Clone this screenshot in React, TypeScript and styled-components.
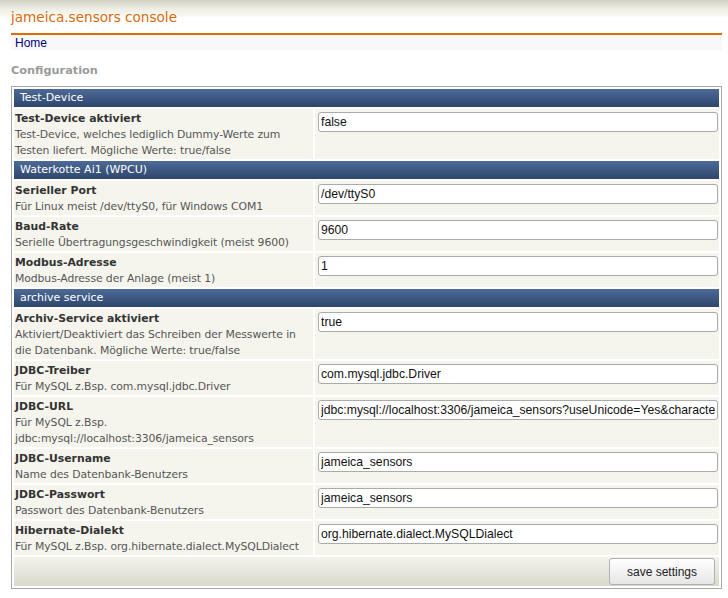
import styled, { createGlobalStyle } from "styled-components";

type Field = {
    label: string;
    desc: string;
    value: string;
};

type Section = {
    title: string;
    fields: Field[];
};

const sections: Section[] = [
    {
        title: "Test-Device",
        fields: [
            {
                label: "Test-Device aktiviert",
                desc: "Test-Device, welches lediglich Dummy-Werte zum Testen liefert. Mögliche Werte: true/false",
                value: "false",
            },
        ],
    },
    {
        title: "Waterkotte Ai1 (WPCU)",
        fields: [
            {
                label: "Serieller Port",
                desc: "Für Linux meist /dev/ttyS0, für Windows COM1",
                value: "/dev/ttyS0",
            },
            {
                label: "Baud-Rate",
                desc: "Serielle Übertragungsgeschwindigkeit (meist 9600)",
                value: "9600",
            },
            {
                label: "Modbus-Adresse",
                desc: "Modbus-Adresse der Anlage (meist 1)",
                value: "1",
            },
        ],
    },
    {
        title: "archive service",
        fields: [
            {
                label: "Archiv-Service aktiviert",
                desc: "Aktiviert/Deaktiviert das Schreiben der Messwerte in die Datenbank. Mögliche Werte: true/false",
                value: "true",
            },
            {
                label: "JDBC-Treiber",
                desc: "Für MySQL z.Bsp. com.mysql.jdbc.Driver",
                value: "com.mysql.jdbc.Driver",
            },
            {
                label: "JDBC-URL",
                desc: "Für MySQL z.Bsp. jdbc:mysql://localhost:3306/jameica_sensors",
                value: "jdbc:mysql://localhost:3306/jameica_sensors?useUnicode=Yes&characterEncoding=ISO8859_1",
            },
            {
                label: "JDBC-Username",
                desc: "Name des Datenbank-Benutzers",
                value: "jameica_sensors",
            },
            {
                label: "JDBC-Passwort",
                desc: "Passwort des Datenbank-Benutzers",
                value: "jameica_sensors",
            },
            {
                label: "Hibernate-Dialekt",
                desc: "Für MySQL z.Bsp. org.hibernate.dialect.MySQLDialect",
                value: "org.hibernate.dialect.MySQLDialect",
            },
        ],
    },
];

const App = () => {
    return (
        <>
            <GlobalStyle />
            <Page>
                <Header>
                    <Title>jameica.sensors console</Title>
                </Header>
                <Nav>
                    <NavLink href="#">Home</NavLink>
                </Nav>
                <Heading>Configuration</Heading>
                <Box>
                    <Grid>
                        {sections.map((section) => (
                            <SectionBlock key={section.title}>
                                <SectionHead>{section.title}</SectionHead>
                                {section.fields.map((field) => (
                                    <FieldRow key={field.label}>
                                        <LabelCell>
                                            <Label>{field.label}</Label>
                                            <Desc>{field.desc}</Desc>
                                        </LabelCell>
                                        <ValueCell>
                                            <Input defaultValue={field.value} />
                                        </ValueCell>
                                    </FieldRow>
                                ))}
                            </SectionBlock>
                        ))}
                        <Footer>
                            <SaveButton>save settings</SaveButton>
                        </Footer>
                    </Grid>
                </Box>
            </Page>
        </>
    );
};

const GlobalStyle = createGlobalStyle`
    body {
        margin: 0;
        background: #ffffff;
        font-family: "DejaVu Sans", Verdana, sans-serif;
    }
`;

const Page = styled.div`
    background: linear-gradient(#d2d1c3 0, #eeeee5 9px, #f9f9f3 16px, #ffffff 17px) no-repeat;
    background-size: 100% 17px;
    padding: 0 6px 0 11px;
`;

const Header = styled.div`
    height: 33px;
    display: flex;
    align-items: center;
    border-bottom: 2px solid #dc6d05;
`;

const Title = styled.h1`
    margin: 1px 0 0;
    font-size: 13.6px;
    font-weight: normal;
    color: #d9690a;
`;

const Nav = styled.div`
    height: 15px;
    display: flex;
    align-items: center;
    padding-left: 4px;
    background: #f8f8f8;
`;

const NavLink = styled.a`
    font-family: "Liberation Sans", Arial, sans-serif;
    font-size: 12px;
    color: #000080;
    text-decoration: none;
`;

const Heading = styled.h2`
    margin: 0;
    padding: 13px 0 8px;
    font-size: 11.3px;
    line-height: 15px;
    font-weight: bold;
    color: #9a9a9a;
`;

const Box = styled.div`
    border: 1px solid #a8a8a8;
    padding: 1px 2px 2px;
`;

const Grid = styled.div`
    display: grid;
    grid-template-columns: 299px 1fr;
    row-gap: 2px;
    column-gap: 2px;
    padding-top: 1px;
`;

const SectionBlock = styled.div`
    display: contents;
`;

const SectionHead = styled.div`
    grid-column: 1 / -1;
    height: 18px;
    line-height: 18px;
    padding-left: 6px;
    font-size: 11px;
    color: #ffffff;
    background: linear-gradient(#4d6a97, #2e466c);
`;

const FieldRow = styled.div`
    display: contents;
`;

const LabelCell = styled.div`
    background: #f5f5ee;
    padding: 2px 0 0 1px;
    line-height: 16px;
    font-size: 10.85px;
`;

const Label = styled.div`
    font-weight: bold;
    color: #333333;
`;

const Desc = styled.div`
    color: #555555;
    letter-spacing: -0.1px;
`;

const ValueCell = styled.div`
    background: #f5f5ee;
    padding: 3px 1px 0 3px;
`;

const Input = styled.input`
    box-sizing: border-box;
    display: block;
    width: 100%;
    height: 20px;
    padding: 0 2px;
    border: 1px solid #ababab;
    border-radius: 3px;
    background: #ffffff;
    font-family: "Liberation Sans", Arial, sans-serif;
    font-size: 12.2px;
    color: #111111;
    outline: none;
`;

const Footer = styled.div`
    grid-column: 1 / -1;
    height: 29px;
    display: flex;
    justify-content: flex-end;
    align-items: center;
    padding-right: 4px;
    background: linear-gradient(#f3f3ec, #d9d9cd);
`;

const SaveButton = styled.button`
    width: 106px;
    height: 27px;
    border: 1px solid #b0b0b0;
    border-radius: 3px;
    background: linear-gradient(#ffffff, #e6e6e6);
    font-family: "Liberation Sans", Arial, sans-serif;
    font-size: 12px;
    color: #222222;
    cursor: pointer;
`;

export default App;
